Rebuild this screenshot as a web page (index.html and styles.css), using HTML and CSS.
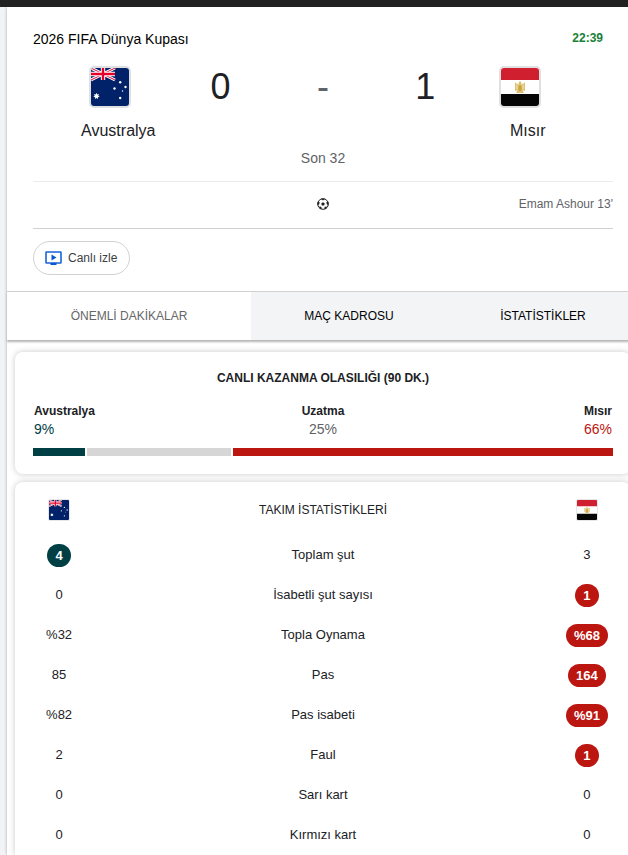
FILE: index.html
```html
<!DOCTYPE html>
<html lang="tr">
<head>
<meta charset="utf-8">
<meta name="viewport" content="width=device-width, initial-scale=1">
<title>Avustralya - Mısır</title>
<link rel="stylesheet" href="styles.css">
</head>
<body>
<svg class="defs" aria-hidden="true">
  <defs>
    <symbol id="flag-au" viewBox="0 0 38 38">
      <rect width="38" height="38" fill="#012169"/>
      <path d="M0 0L24 12M24 0L0 12" stroke="#fff" stroke-width="3"/>
      <path d="M0 0L24 12M24 0L0 12" stroke="#e4002b" stroke-width="1"/>
      <path d="M12 0V12M0 6H24" stroke="#fff" stroke-width="4.4"/>
      <path d="M12 0V12M0 6H24" stroke="#e4002b" stroke-width="2.4"/>
      <path fill="#fff" d="M5.500 24.800L6.281 26.479L8.080 26.043L7.254 27.700L8.717 28.834L6.905 29.221L6.932 31.073L5.500 29.900L4.068 31.073L4.095 29.221L2.283 28.834L3.746 27.700L2.920 26.043L4.719 26.479Z"/>
      <g fill="#fff"><circle cx="29.200" cy="14.200" r="1.200"/><circle cx="34.500" cy="19" r="1.200"/><circle cx="23.500" cy="20.500" r="1.200"/><circle cx="29.200" cy="30" r="1.200"/><circle cx="31.500" cy="23" r=".700"/></g>
    </symbol>
    <symbol id="flag-eg" viewBox="0 0 38 38">
      <rect width="38" height="38" fill="#fff"/>
      <path d="M0 0H38V12H0Z" fill="#d0202f"/>
      <path d="M0 26H38V38H0Z" fill="#050505"/>
      <path d="M14 14.500L17.500 16.500L18 13.500H20L20.500 16.500L24 14.500V23L21.500 22L23 25H15L16.500 22L14 23Z" fill="#dfc271"/>
      <path d="M17.500 17.500H20.500V22L19 23.500L17.500 22Z" fill="#c7a23d"/>
      <path d="M16 16.500V21M22 16.500V21" stroke="#f3e5b8"/>
    </symbol>
  </defs>
</svg>
<div class="topbar"></div>
<main class="panel">
  <header class="match">
    <div class="match-head">
      <h1 class="league">2026 FIFA Dünya Kupası</h1>
      <time class="clock">22:39</time>
    </div>
    <div class="scoreboard">
      <div class="team">
        <svg class="flag" role="img" aria-label="Avustralya bayrağı"><use href="#flag-au"/></svg>
        <span class="team-name">Avustralya</span>
      </div>
      <div class="score"><span>0</span><span class="dash">-</span><span>1</span></div>
      <div class="team">
        <svg class="flag" role="img" aria-label="Mısır bayrağı"><use href="#flag-eg"/></svg>
        <span class="team-name">Mısır</span>
      </div>
    </div>
    <p class="round">Son 32</p>
    <div class="events">
      <svg class="ball" viewBox="0 0 12 12" aria-hidden="true">
        <circle cx="6" cy="6" r="5.300" fill="none" stroke="#202124"/>
        <path fill="#202124" d="M6 4.200L7.800 5.500L7.100 7.500H4.900L4.200 5.500ZM3.800 .800H8.200L6 2.600ZM.600 3.800L2.700 4.200L2.200 6.300L.600 7.200ZM11.400 3.800L9.300 4.200L9.800 6.300L11.400 7.200ZM2.200 10.200L2.600 8.200L4.600 9.200L4.300 11.400ZM9.800 10.200L9.400 8.200L7.400 9.200L7.700 11.400Z"/>
      </svg>
      <span class="scorer">Emam Ashour 13'</span>
    </div>
    <button class="watch" type="button">
      <svg class="watch-icon" viewBox="0 0 17 14" aria-hidden="true">
        <rect x="1" y="1" width="15" height="11" rx=".5" fill="none" stroke="#1a62d9" stroke-width="1.600"/>
        <path d="M6.500 3.500V9.500L11.500 6.500ZM5.500 12H11.500V14H5.500Z" fill="#0b57d0"/>
      </svg>
      Canlı izle
    </button>
  </header>
  <div class="tabs" role="tablist">
    <button class="tab tab-key active" type="button" role="tab" aria-selected="true">ÖNEMLİ DAKİKALAR</button>
    <button class="tab tab-lineup" type="button" role="tab" aria-selected="false">MAÇ KADROSU</button>
    <button class="tab tab-stats" type="button" role="tab" aria-selected="false">İSTATİSTİKLER</button>
  </div>
  <div class="cards">
    <section class="card odds">
      <h2 class="odds-title">CANLI KAZANMA OLASILIĞI (90 DK.)</h2>
      <div class="odds-labels">
        <div><b>Avustralya</b><span class="pct home">9%</span></div>
        <div class="middle"><b>Uzatma</b><span class="pct">25%</span></div>
        <div class="end"><b>Mısır</b><span class="pct away">66%</span></div>
      </div>
      <div class="bar">
        <span class="bar-home" style="flex-grow:9"></span>
        <span class="bar-draw" style="flex-grow:25"></span>
        <span class="bar-away" style="flex-grow:66"></span>
      </div>
    </section>
    <section class="card stats">
      <table>
        <thead>
          <tr>
            <th class="side" scope="col"><svg class="flag small" role="img" aria-label="Avustralya"><use href="#flag-au"/></svg></th>
            <th scope="col">TAKIM İSTATİSTİKLERİ</th>
            <th class="side" scope="col"><svg class="flag small" role="img" aria-label="Mısır"><use href="#flag-eg"/></svg></th>
          </tr>
        </thead>
        <tbody>
          <tr><td><span class="pill home-pill">4</span></td><th scope="row">Toplam şut</th><td>3</td></tr>
          <tr><td>0</td><th scope="row">İsabetli şut sayısı</th><td><span class="pill">1</span></td></tr>
          <tr><td>%32</td><th scope="row">Topla Oynama</th><td><span class="pill">%68</span></td></tr>
          <tr><td>85</td><th scope="row">Pas</th><td><span class="pill">164</span></td></tr>
          <tr><td>%82</td><th scope="row">Pas isabeti</th><td><span class="pill">%91</span></td></tr>
          <tr><td>2</td><th scope="row">Faul</th><td><span class="pill">1</span></td></tr>
          <tr><td>0</td><th scope="row">Sarı kart</th><td>0</td></tr>
          <tr><td>0</td><th scope="row">Kırmızı kart</th><td>0</td></tr>
        </tbody>
      </table>
    </section>
  </div>
</main>
</body>
</html>
```
FILE: styles.css
```css
* { box-sizing: border-box; }

body {
  margin: 0;
  background: #f1f3f4;
  color: #202124;
  font: 12px/20px "Liberation Sans", Arial, sans-serif;
  overflow-x: hidden;
}

button { font: inherit; cursor: pointer; }
h1, h2, p { margin: 0; }

.defs { position: absolute; width: 0; height: 0; }

.topbar { height: 7px; background: #212121; }

.panel {
  margin-left: 7px;
  background: #fff;
  box-shadow: 0 0 3px rgba(0, 0, 0, .3);
  clip-path: inset(0 0 0 -4px);
}

.match { padding: 22px 15px 16px 26px; }

.match-head {
  display: flex;
  justify-content: space-between;
  padding-right: 10px;
}
.league { font-size: 14px; font-weight: 400; color: #000; }
.clock { font-weight: 700; color: #188038; line-height: 18px; }

.scoreboard {
  display: grid;
  grid-template-columns: 5fr 7fr 5fr;
  margin-top: 17px;
}
.team {
  display: flex;
  flex-direction: column;
  align-items: center;
  gap: 13px;
}
.team .flag { margin-right: 16px; }
.team-name { font-size: 16px; }

.flag {
  display: block;
  width: 42px;
  height: 42px;
  border: 2px solid #dfe0e2;
  border-radius: 5px;
}
.flag.small {
  width: 22px;
  height: 22px;
  margin: 0 auto;
  border: 1px solid #e6e6e8;
  border-radius: 2px;
}

.score {
  display: flex;
  justify-content: space-between;
  padding: 0 7px;
  font-size: 36px;
  line-height: 42px;
}
.dash { color: #5f6368; }

.round {
  margin-top: 7px;
  padding-bottom: 13px;
  border-bottom: 1px solid #ebebeb;
  text-align: center;
  font-size: 14px;
  color: #5f6368;
}

.events {
  display: grid;
  grid-template-columns: 1fr auto 1fr;
  align-items: center;
  height: 47px;
  padding-bottom: 2px;
  border-bottom: 1px solid #d2d2d2;
  color: #5f6368;
}
.ball { grid-column: 2; width: 12px; height: 12px; }
.scorer { text-align: right; }

.watch {
  display: flex;
  align-items: center;
  gap: 6px;
  height: 34px;
  margin-top: 12px;
  padding: 0 12px 0 11px;
  border: 1px solid #d2d2d2;
  border-radius: 17px;
  background: #fff;
  color: #3c4043;
}
.watch-icon { width: 17px; height: 14px; }

.tabs {
  display: flex;
  position: relative;
  margin-right: -11px;
  border-top: 1px solid #d2d2d2;
  box-shadow: 0 2px 2px #b4b4b4;
}
.tab {
  height: 48px;
  padding: 0;
  border: 0;
  background: #f3f4f6;
  color: #000;
}
.tab-key { flex: 244 1 0; }
.tab-lineup { flex: 196 1 0; }
.tab-stats { flex: 192 1 0; }
.tab.active { background: #fff; color: #666; }

.cards {
  display: flex;
  flex-direction: column;
  gap: 8px;
  margin-right: -3px;
  padding: 12px 0 0 8px;
}
.card {
  padding: 0 18px;
  border-radius: 8px;
  background: #fff;
  box-shadow: 0 0 6px rgba(0, 0, 0, .22);
}
.stats { border-radius: 8px 8px 0 0; }

.odds { padding-top: 16px; padding-bottom: 18px; }
.odds-title { font-size: 12px; text-align: center; }
.odds-labels {
  display: grid;
  grid-template-columns: 1fr 1fr 1fr;
  margin-top: 14px;
  padding: 0 1px;
  line-height: 18px;
}
.odds-labels b, .pct { display: block; }
.middle { text-align: center; }
.end { justify-self: end; }
.pct { font-size: 14px; color: #5f6368; }
.home { color: #004045; }
.away { color: #bc1610; }

.bar { display: flex; gap: 2px; height: 8px; margin-top: 10px; }
.bar-home { background: #004045; }
.bar-draw { background: #d6d6d6; }
.bar-away { background: #bc1610; }

.stats { padding-top: 3px; }
table {
  width: 100%;
  border-collapse: collapse;
  table-layout: fixed;
  font-size: 13px;
  text-align: center;
}
th, td { height: 40px; padding: 0; font-weight: 400; }
thead th { height: 50px; padding-bottom: 1px; font-size: 12px; }
.side { width: 9%; }

.pill {
  display: inline-block;
  min-width: 23px;
  padding: 0 8px;
  border-radius: 12px;
  background: #bc1610;
  color: #fff;
  font-weight: 700;
  line-height: 23px;
  vertical-align: bottom;
}
.home-pill { background: #004045; }
```
